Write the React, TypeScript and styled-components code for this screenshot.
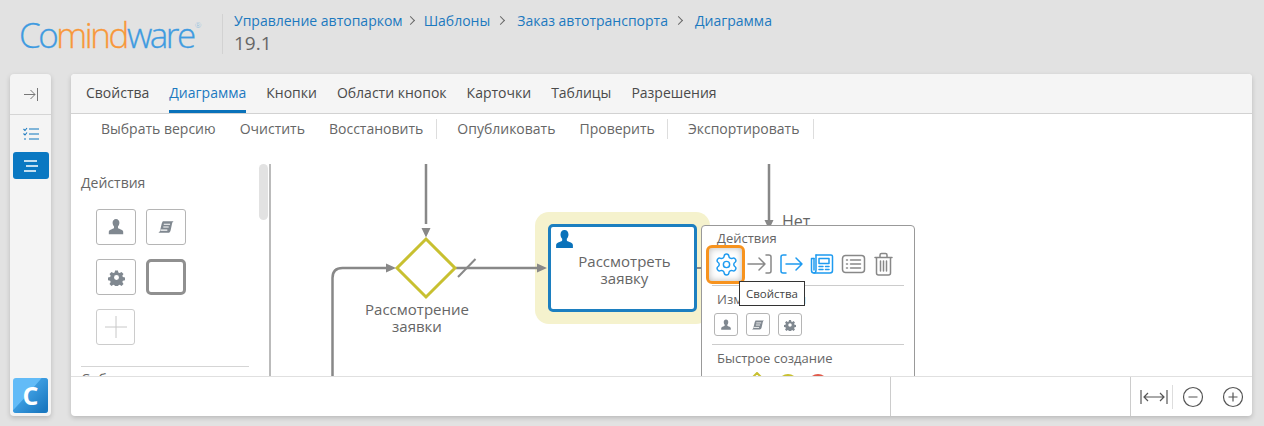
import { Fragment, ReactNode } from 'react';
import styled, { createGlobalStyle } from 'styled-components';
import { Settings } from 'lucide-react';

const GlobalStyle = createGlobalStyle`
  html, body {
    margin: 0;
    padding: 0;
    background: #e2e2e2;
  }
  * {
    box-sizing: border-box;
  }
`;

const Page = styled.div`
  width: 1264px;
  height: 426px;
  overflow: hidden;
  background: #e2e2e2;
  font-family: 'Open Sans', sans-serif;
  font-size: 14px;
  color: #555;
`;

const Header = styled.div`
  height: 74px;
  display: flex;
  align-items: flex-start;
  padding: 14px 0 0 19px;
`;

const Logo = styled.div`
  width: 203px;
  margin-top: 1px;
  display: flex;
  align-items: flex-start;
  font-weight: 300;
  font-size: 35px;
  line-height: 40px;
  letter-spacing: -2.45px;
  -webkit-text-stroke: 0.3px currentColor;
  color: #3f9be0;
  span {
    color: #f8983a;
  }
  sup {
    font-size: 8px;
    line-height: 10px;
    letter-spacing: 0;
    -webkit-text-stroke: 0;
    margin: 5px 0 0 1px;
    color: #8fbfe0;
  }
`;

const HeaderInfo = styled.div`
  border-left: 1px solid #d2d2d2;
  height: 40px;
  padding-left: 11px;
`;

const Crumbs = styled.div`
  display: flex;
  align-items: center;
  height: 13px;
  color: #1c79bf;
  font-size: 14px;
  line-height: 13px;
  white-space: nowrap;
`;

const CrumbArrow = styled.span<{ $gap: number }>`
  width: 7px;
  height: 7px;
  margin: 0 ${(p) => p.$gap}px 0 ${(p) => (p.$gap > 10 ? 7 : 4)}px;
  border-top: 1px solid #666;
  border-right: 1px solid #666;
  transform: scale(0.9) rotate(45deg);
`;

const Version = styled.div`
  margin-top: 5px;
  font-size: 19px;
  line-height: 22px;
  color: #666;
`;

const Body = styled.div`
  display: flex;
  gap: 20px;
  padding-left: 10px;
  height: 342px;
`;

const Sidebar = styled.div`
  width: 41px;
  background: #f4f4f4;
  border-radius: 4px;
  box-shadow: 0 2px 5px rgba(0, 0, 0, 0.18);
  display: flex;
  flex-direction: column;
  align-items: center;
`;

const SideTop = styled.div`
  width: 100%;
  height: 41px;
  border-bottom: 1px solid #d5d5d5;
  display: flex;
  align-items: center;
  justify-content: center;
`;

const SideItem = styled.div<{ $active?: boolean }>`
  width: 36px;
  height: 27px;
  margin-top: 5px;
  border-radius: 3px;
  background: ${(p) => (p.$active ? '#0a78c2' : 'transparent')};
  display: flex;
  align-items: center;
  justify-content: center;
`;

const SideLogo = styled.div`
  margin-top: auto;
  margin-bottom: 3px;
  width: 35px;
  height: 35px;
  border-radius: 3px;
  background: #62bbf7;
  color: #fff;
  font-weight: 700;
  font-size: 25px;
  line-height: 35px;
  text-align: center;
  position: relative;
  overflow: hidden;

  &::before {
    content: '';
    position: absolute;
    inset: 0;
    background: linear-gradient(135deg, #3a9ade 45%, #1a78c0 90%);
    clip-path: polygon(82% 0, 100% 0, 100% 100%, 0 100%, 0 92%, 30% 60%);
  }

  span {
    position: relative;
  }
`;

const Main = styled.div`
  width: 1181px;
  background: #fff;
  border-radius: 4px;
  box-shadow: 0 2px 5px rgba(0, 0, 0, 0.18);
  display: flex;
  flex-direction: column;
  overflow: hidden;
`;

const Tabs = styled.div`
  height: 40px;
  flex: none;
  background: #f5f5f5;
  border-bottom: 1px solid #d2d2d2;
  display: flex;
  gap: 20px;
  padding-left: 15px;
`;

const Tab = styled.div<{ $active?: boolean }>`
  height: 39px;
  line-height: 38px;
  color: ${(p) => (p.$active ? '#1c79bf' : '#4a4a4a')};
  border-bottom: 3px solid ${(p) => (p.$active ? '#0a72ba' : 'transparent')};
  white-space: nowrap;
`;

const Toolbar = styled.div`
  height: 29px;
  flex: none;
  display: flex;
  align-items: center;
  padding-left: 30px;
`;

const ToolButton = styled.div<{ $gap?: number }>`
  line-height: 20px;
  white-space: nowrap;
  color: #666;
  margin-right: ${(p) => p.$gap ?? 24}px;
`;

const ToolDivider = styled.div<{ $gap: number }>`
  width: 1px;
  height: 20px;
  background: #ddd;
  margin-right: ${(p) => p.$gap}px;
`;

const Workspace = styled.div`
  flex: 1;
  min-height: 0;
  display: flex;
  padding-top: 21px;
`;

const Palette = styled.div`
  width: 200px;
  height: 212px;
  flex: none;
  overflow: hidden;
  position: relative;
  border-right: 2px solid #bbb;
  padding: 9px 0 0 10px;
`;

const PaletteTitle = styled.div`
  font-size: 14px;
  line-height: 20px;
  color: #666;
`;

const PaletteGrid = styled.div`
  display: grid;
  grid-template-columns: 40px 40px;
  grid-auto-rows: 36px;
  gap: 14px 10px;
  margin: 16px 0 0 15px;
`;

const ShapeButton = styled.div<{ $thick?: boolean; $faint?: boolean }>`
  border: ${(p) => (p.$thick ? '3px solid #909090' : '1.5px solid #b5b5b5')};
  border-radius: ${(p) => (p.$thick ? 5 : 3)}px;
  display: flex;
  align-items: center;
  justify-content: center;
  ${(p) => (p.$faint ? 'border-color: #ccc; margin-right: 1px;' : '')}
`;

const PaletteRule = styled.div`
  height: 1px;
  width: 168px;
  margin-top: 21px;
  background: #d5d5d5;
`;

const PaletteNext = styled.div`
  padding-top: 2px;
  line-height: 20px;
  color: #666;
`;

const Thumb = styled.div`
  position: absolute;
  top: 0;
  right: 1px;
  width: 9px;
  height: 56px;
  border-radius: 5px;
  background: #e2e2e2;
`;

const Canvas = styled.div`
  flex: 1;
  height: 212px;
  margin-left: 1px;
  position: relative;
  overflow: hidden;
`;

const CanvasLines = styled.svg`
  position: absolute;
  left: 0;
  top: 0;
`;

const NodeLabel = styled.div<{ $x: number; $y: number }>`
  position: absolute;
  left: ${(p) => p.$x}px;
  top: ${(p) => p.$y}px;
  transform: translateX(-50%);
  font-size: 15px;
  line-height: 17px;
  text-align: center;
  color: #666;
  white-space: nowrap;
`;

const FlowNote = styled.div`
  position: absolute;
  left: 510px;
  top: 47px;
  font-size: 16px;
  line-height: 20px;
  color: #666;
`;

const Halo = styled.div`
  position: absolute;
  left: 263px;
  top: 48px;
  width: 175px;
  height: 112px;
  border-radius: 14px;
  background: #f5f2cd;
`;

const Task = styled.div`
  position: absolute;
  left: 276px;
  top: 60px;
  width: 149px;
  height: 88px;
  border: 3px solid #1c7fc0;
  border-radius: 5px;
  background: #fff;
  padding: 26px 0 0 4px;
  text-align: center;
  font-size: 15px;
  line-height: 17px;
  color: #666;
`;

const TaskIcon = styled.div`
  position: absolute;
  left: 3px;
  top: 2px;
  width: 21px;
  height: 21px;
`;

const Popup = styled.div`
  position: absolute;
  left: 429px;
  top: 61px;
  width: 214px;
  height: 170px;
  background: #fff;
  border: 1px solid #999;
  border-radius: 4px;
  padding: 4px 10px 0;
`;

const PopupTitle = styled.div`
  font-size: 13px;
  line-height: 16px;
  color: #666;
  padding-left: 5px;
  white-space: nowrap;
`;

const PopupIcons = styled.div`
  display: flex;
  align-items: center;
  height: 26px;
  margin: 5px 0 0 -2px;
`;

const GearCell = styled.div`
  width: 32px;
  height: 26px;
  display: flex;
  align-items: center;
  justify-content: center;
  color: #1e9bf0;
`;

const PopupRule = styled.div`
  height: 1px;
  background: #ccc;
  margin: 8px 0 5px;
`;

const HighlightBox = styled.div`
  position: absolute;
  left: 4px;
  top: 19px;
  width: 39px;
  height: 39px;
  border: 3.5px solid #f7931e;
  border-radius: 6px;
  box-shadow: inset 0 0 7px rgba(0, 0, 0, 0.28);
`;

const TinyRow = styled.div`
  display: flex;
  gap: 8px;
  margin: 6px 0 0 2px;
`;

const TinyButton = styled.div`
  width: 24px;
  height: 23px;
  border: 1.5px solid #b5b5b5;
  border-radius: 3px;
  display: flex;
  align-items: center;
  justify-content: center;
`;

const QuickShapes = styled.svg`
  display: block;
  margin-top: 6px;
`;

const Tooltip = styled.div`
  position: absolute;
  left: 467px;
  top: 117px;
  width: 66px;
  height: 25px;
  background: #fff;
  border: 1px solid #333;
  font-size: 11.5px;
  line-height: 23px;
  text-align: center;
  color: #444;
`;

const Footer = styled.div`
  height: 40px;
  flex: none;
  border-top: 1px solid #e0e0e0;
  display: flex;
`;

const FooterCell = styled.div<{ $w: number }>`
  width: ${(p) => p.$w}px;
  height: 100%;
  border-right: 1px solid #ccc;
`;

const ZoomTools = styled.div`
  flex: 1;
  display: flex;
  align-items: center;
  padding-left: 9px;
`;

const ZoomDivider = styled.div`
  width: 1px;
  height: 24px;
  background: #ddd;
  margin: 0 9px 0 4px;
`;

const ZoomPlus = styled.svg`
  margin-left: 18px;
`;

const PersonGlyph = ({ size = 20, color = '#808890' }: { size?: number; color?: string }) => (
  <svg width={size} height={size} viewBox="0 0 20 20">
    <path
      fill={color}
      d="M10 1c2.400 0 3.800 1.900 3.800 4.300 0 1.700-.7 3.200-1.600 4.100v1.400c0 .7 1 1.100 2.500 1.600 2 .7 3.300 1.300 3.300 3V18H2v-2.600c0-1.700 1.300-2.300 3.300-3 1.500-.5 2.500-.9 2.500-1.600V9.400C6.900 8.500 6.200 7 6.200 5.300 6.200 2.900 7.600 1 10 1z"
    />
  </svg>
);

const ScrollGlyph = ({ size = 20 }: { size?: number }) => (
  <svg width={size} height={size} viewBox="0 0 20 20" fill="none">
    <path
      fill="#808890"
      d="M6.500 3.500H18.500c-1.100.7-1.500 1.600-1.800 2.800L15.300 13c-.3 1.800-1.300 3.500-3 3.500H1.500c1.200-.6 1.700-1.400 2-2.800L5.200 6.500C5.400 5.300 6 4.300 6.500 3.500z"
    />
    <path d="M7.500 7h7M7 10h6M3.800 13.500h7.700" stroke="#fff" strokeWidth="1.200" />
  </svg>
);

const CogGlyph = ({ size = 20 }: { size?: number }) => (
  <svg width={size} height={size} viewBox="0 0 24 24">
    <path
      fill="#808890"
      fillRule="evenodd"
      d="M10 2h4l.6 3 1.900.8 2.600-1.700 2.800 2.800-1.700 2.600.8 1.900 3 .6v4l-3 .6-.8 1.900 1.700 2.600-2.800 2.800-2.600-1.700-1.900.8-.6 3h-4l-.6-3-1.900-.8-2.600 1.700-2.800-2.800 1.700-2.600-.8-1.900-3-.6v-4l3-.6.8-1.900-1.700-2.600 2.800-2.800 2.600 1.700 1.900-.8zM12 8.500a3.500 3.500 0 1 0 0 7 3.500 3.500 0 0 0 0-7z"
    />
  </svg>
);

const PopupIcon = ({ children, w = 32 }: { children: ReactNode; w?: number }) => (
  <svg width={w} height="26" viewBox={`0 0 ${w} 26`} fill="none" strokeLinecap="round" strokeLinejoin="round">
    {children}
  </svg>
);

const crumbs = ['Управление автопарком', 'Шаблоны', 'Заказ автотранспорта', 'Диаграмма'];
const tabs = ['Свойства', 'Диаграмма', 'Кнопки', 'Области кнопок', 'Карточки', 'Таблицы', 'Разрешения'];

export default function App() {
  return (
    <Page>
      <GlobalStyle />
      <Header>
        <Logo>
          Co<span>mind</span>ware<sup>®</sup>
        </Logo>
        <HeaderInfo>
          <Crumbs>
            {crumbs.map((c, i) => (
              <Fragment key={c}>
                {c}
                {i < crumbs.length - 1 && <CrumbArrow $gap={i === 0 ? 10 : 13} />}
              </Fragment>
            ))}
          </Crumbs>
          <Version>19.1</Version>
        </HeaderInfo>
      </Header>
      <Body>
        <Sidebar>
          <SideTop>
            <svg width="14" height="13" viewBox="0 0 14 13" fill="none" stroke="#777" strokeWidth="1">
              <path d="M0 6.500h11M6.500 2 11 6.500 6.500 11M13.500 0v13" />
            </svg>
          </SideTop>
          <SideItem>
            <svg width="16" height="14" viewBox="0 0 16 14" fill="none">
              <path d="M6 2h10M6 7h10M6 12h10" stroke="#5aa0d0" strokeWidth="1.600" />
              <path d="M0.500 2 2 3.500 4 1M0.500 6.500 2 8 4 5.500M1 12h2" stroke="#1c79bf" strokeWidth="1.100" />
            </svg>
          </SideItem>
          <SideItem $active>
            <svg width="14" height="14" viewBox="0 0 14 14" stroke="#fff" strokeWidth="1.400">
              <path d="M0 2h13M2 7h12M0 12h12" />
            </svg>
          </SideItem>
          <SideLogo>
            <span>C</span>
          </SideLogo>
        </Sidebar>
        <Main>
          <Tabs>
            {tabs.map((t) => (
              <Tab key={t} $active={t === 'Диаграмма'}>
                {t}
              </Tab>
            ))}
          </Tabs>
          <Toolbar>
            <ToolButton>Выбрать версию</ToolButton>
            <ToolButton>Очистить</ToolButton>
            <ToolButton $gap={13}>Восстановить</ToolButton>
            <ToolDivider $gap={20} />
            <ToolButton>Опубликовать</ToolButton>
            <ToolButton $gap={12}>Проверить</ToolButton>
            <ToolDivider $gap={20} />
            <ToolButton $gap={14}>Экспортировать</ToolButton>
            <ToolDivider $gap={0} />
          </Toolbar>
          <Workspace>
            <Palette>
              <PaletteTitle>Действия</PaletteTitle>
              <PaletteGrid>
                <ShapeButton>
                  <PersonGlyph size={18} />
                </ShapeButton>
                <ShapeButton>
                  <ScrollGlyph size={18} />
                </ShapeButton>
                <ShapeButton>
                  <CogGlyph size={17} />
                </ShapeButton>
                <ShapeButton $thick />
                <ShapeButton $faint>
                  <svg width="22" height="22" viewBox="0 0 22 22" stroke="#c8c8c8">
                    <path d="M11 0v22M0 11h22" />
                  </svg>
                </ShapeButton>
              </PaletteGrid>
              <PaletteRule />
              <PaletteNext>События</PaletteNext>
              <Thumb />
            </Palette>
            <Canvas>
              <Halo />
              <CanvasLines width="982" height="212" fill="none">
                <g stroke="#888" strokeWidth="2.500">
                  <path d="M154 0v60" />
                  <path d="M497 0v60" />
                  <path d="M60.500 212V114q0-10 10-10h46" />
                  <path d="M184 104h82" />
                  <path d="M425 104h4" strokeWidth="2" />
                  <path d="M186 113l17.500-18" strokeWidth="2" />
                </g>
                <path d="M149.500 64h9l-4.500 9.500zM492.500 56h9l-4.500 9.500zM114 99.500l10 4.500-10 4.500zM265 99.500l10 4.500-10 4.500z" fill="#888" />
                <path d="M154 75 183 104 154 133 125 104z" stroke="#c8c030" strokeWidth="3" />
              </CanvasLines>
              <NodeLabel $x={145} $y={137}>
                Рассмотрение
                <br />
                заявки
              </NodeLabel>
              <FlowNote>Нет</FlowNote>
              <Task>
                <TaskIcon>
                  <PersonGlyph size={21} color="#0a72ba" />
                </TaskIcon>
                Рассмотреть
                <br />
                заявку
              </Task>
              <Popup>
                <PopupTitle>Действия</PopupTitle>
                <PopupIcons>
                  <GearCell>
                    <Settings size={25} strokeWidth={1.4} />
                  </GearCell>
                  <PopupIcon>
                    <path d="M6 13h17M17 7l6 6-6 6M24 4h3q2 0 2 2v14q0 2-2 2h-3" stroke="#888" strokeWidth="1.500" />
                  </PopupIcon>
                  <PopupIcon>
                    <path d="M12 4H9Q7 4 7 6v14q0 2 2 2h3M12 13h16M22 7l6 6-6 6" stroke="#1e9bf0" strokeWidth="1.500" />
                  </PopupIcon>
                  <PopupIcon>
                    <g stroke="#1e9bf0" strokeWidth="1.500">
                      <path d="M10 4h15q1.500 0 1.500 1.500v14q0 2.500-2.500 2.500H8q-2.500 0-2.500-2.500V7.500H8" />
                      <path d="M10 4v15q0 3-2 3M8 7.500V19" />
                      <path d="M13 7.500h10v5H13zM13 15.500h4M19.500 15.500H23M13 18.500h4M19.500 18.500H23" />
                    </g>
                  </PopupIcon>
                  <PopupIcon>
                    <g stroke="#888" strokeWidth="1.500">
                      <rect x="4.500" y="4.500" width="22" height="17" rx="3" />
                      <path d="M8.500 9h1M12.500 9h10M8.500 13h1M12.500 13h10M8.500 17h1M12.500 17h10" />
                    </g>
                  </PopupIcon>
                  <PopupIcon w={28}>
                    <g stroke="#888" strokeWidth="1.500">
                      <path d="M5 6.500h17M10 6.500V4q0-1.500 1.500-1.500h4Q17 2.500 17 4v2.500M6.500 6.500V22q0 2 2 2h10q2 0 2-2V6.500M10.500 10v10M13.500 10v10M16.500 10v10" />
                    </g>
                  </PopupIcon>
                </PopupIcons>
                <HighlightBox />
                <PopupRule />
                <PopupTitle>Изменить тип</PopupTitle>
                <TinyRow>
                  <TinyButton>
                    <PersonGlyph size={12} />
                  </TinyButton>
                  <TinyButton>
                    <ScrollGlyph size={14} />
                  </TinyButton>
                  <TinyButton>
                    <CogGlyph size={12} />
                  </TinyButton>
                </TinyRow>
                <PopupRule />
                <PopupTitle>Быстрое создание</PopupTitle>
                <QuickShapes width="120" height="20" viewBox="0 0 120 20" fill="none" strokeWidth="2">
                  <path d="M45 1 54 10 45 19 36 10z" stroke="#c8c030" />
                  <circle cx="76" cy="12" r="9" stroke="#c8c030" />
                  <circle cx="106" cy="12" r="9" stroke="#e05a4a" />
                </QuickShapes>
              </Popup>
              <Tooltip>Свойства</Tooltip>
            </Canvas>
          </Workspace>
          <Footer>
            <FooterCell $w={820} />
            <FooterCell $w={240} />
            <ZoomTools>
              <svg width="28" height="16" viewBox="0 0 28 16" fill="none" stroke="#555" strokeWidth="1.200">
                <path d="M1 1v14M27 1v14M4 8h20M8 4 4 8l4 4M20 4l4 4-4 4" />
              </svg>
              <ZoomDivider />
              <svg width="22" height="22" viewBox="0 0 22 22" fill="none" stroke="#555" strokeWidth="1.200">
                <circle cx="11" cy="11" r="9.500" />
                <path d="M6.500 11h9" />
              </svg>
              <ZoomPlus width="22" height="22" viewBox="0 0 22 22" fill="none" stroke="#555" strokeWidth="1.200">
                <circle cx="11" cy="11" r="9.500" />
                <path d="M6.500 11h9M11 6.500v9" />
              </ZoomPlus>
            </ZoomTools>
          </Footer>
        </Main>
      </Body>
    </Page>
  );
}
